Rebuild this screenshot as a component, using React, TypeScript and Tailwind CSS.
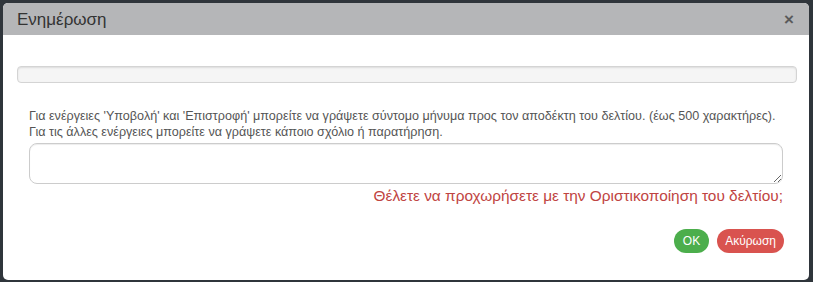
export default function App() {
  return (
    <div className="w-[813px] h-[282px] bg-[#2f353b] pt-[3px] pl-[3px] font-['Liberation_Sans',Arial,sans-serif]">
      <div className="w-[806px] h-[277px] bg-white rounded-[5px] overflow-hidden flex flex-col">
        <div className="h-[32px] bg-[#b5b6b8] flex items-center justify-between pl-[14px] pr-[15px]">
          <h4 className="text-[17px] text-[#333] leading-none">Ενημέρωση</h4>
          <button className="text-[#444] text-[17px] font-bold leading-none opacity-80">×</button>
        </div>
        <div className="flex flex-col pl-[14px] pr-[12px] pt-[31px]">
          <div className="h-[17px] bg-[#f5f5f5] border border-[#d4d4d4] rounded-[4px] shadow-[inset_0_1px_2px_rgba(0,0,0,0.1)]" />
          <div className="pl-[12px] pr-[14px] pt-[25px]">
            <p className="text-[12.6px] leading-[16px] text-[#555] whitespace-nowrap">
              Για ενέργειες 'Υποβολή' και 'Επιστροφή' μπορείτε να γράψετε σύντομο μήνυμα προς τον αποδέκτη του δελτίου. (έως 500 χαρακτήρες).
              <br />
              Για τις άλλες ενέργειες μπορείτε να γράψετε κάποιο σχόλιο ή παρατήρηση.
            </p>
            <textarea className="mt-[3px] block w-full h-[41px] border border-[#ccc] rounded-[8px] resize-y shadow-[inset_0_1px_1px_rgba(0,0,0,0.075)]" />
            <p className="text-right text-[15.4px] leading-[20px] text-[#bf4442] pt-[2px]">
              Θέλετε να προχωρήσετε με την Οριστικοποίηση του δελτίου;
            </p>
            <div className="flex justify-end gap-[8px] pt-[23px] -mr-[1px]">
              <button className="h-[24px] px-[9px] rounded-full bg-[#4cae4c] text-white text-[12px]">OK</button>
              <button className="h-[24px] px-[8px] rounded-full bg-[#d9534f] text-white text-[12px]">Ακύρωση</button>
            </div>
          </div>
        </div>
      </div>
    </div>
  );
}
